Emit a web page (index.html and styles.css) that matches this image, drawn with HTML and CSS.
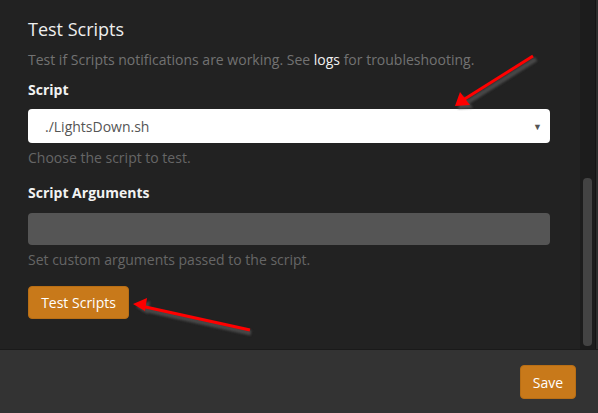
FILE: index.html
```html
<!DOCTYPE html>
<html>
<head>
<meta charset="utf-8">
<link rel="stylesheet" href="styles.css">
</head>
<body>
<div class="page">
  <div class="main">
    <div class="content">
      <h2 class="title">Test Scripts</h2>
      <p class="desc">Test if Scripts notifications are working. See <a class="link">logs</a> for troubleshooting.</p>
      <div class="label label-first">Script</div>
      <div class="select"><span>./LightsDown.sh</span><span class="caret">&#9660;</span></div>
      <div class="help">Choose the script to test.</div>
      <div class="label label-second">Script Arguments</div>
      <div class="input"></div>
      <div class="help">Set custom arguments passed to the script.</div>
      <button class="btn btn-test">Test Scripts</button>
    </div>
    <div class="track"><div class="thumb"></div></div>
    <div class="edge"></div>
  </div>
  <div class="footer">
    <button class="btn btn-save">Save</button>
  </div>
  <svg class="arrows" width="598" height="413" viewBox="0 0 598 413">
    <defs>
      <filter id="blur" x="-20%" y="-20%" width="140%" height="140%">
        <feGaussianBlur stdDeviation="1.2"/>
      </filter>
    </defs>
    <g filter="url(#blur)" opacity="0.75">
      <line x1="536" y1="59" x2="466" y2="103" stroke="#555" stroke-width="5"/>
      <polygon points="458,109 463,95 473,108" fill="#555"/>
      <line x1="251" y1="333" x2="143" y2="309" stroke="#555" stroke-width="5"/>
      <polygon points="136,307 150,301 148,314" fill="#555"/>
    </g>
    <line x1="533" y1="56" x2="463" y2="100" stroke="#f00" stroke-width="3"/>
    <polygon points="455,106 460,92 470,105" fill="#f00"/>
    <line x1="250" y1="330" x2="141" y2="306" stroke="#f00" stroke-width="3"/>
    <polygon points="133,304 147,298 145,311" fill="#f00"/>
  </svg>
</div>
</body>
</html>
```

FILE: styles.css
```css
html, body {
  margin: 0;
  padding: 0;
  background: #222222;
}

.page {
  position: relative;
  width: 598px;
  height: 413px;
  display: flex;
  flex-direction: column;
  font-family: "Open Sans", "Liberation Sans", sans-serif;
  overflow: hidden;
}

.main {
  display: flex;
  height: 349px;
  background: #222222;
}

.content {
  flex: 1;
  padding: 17px 30px 0 28px;
}

.title {
  margin: 0;
  font-size: 18px;
  line-height: 24px;
  font-weight: 400;
  color: #eeeeee;
}

.desc {
  margin: 9px 0 0 0;
  font-size: 14px;
  line-height: 20px;
  color: #727272;
}

.link {
  color: #f0f0f0;
}

.label {
  font-size: 14px;
  line-height: 20px;
  font-weight: 700;
  color: #f2f2f2;
}

.label-first {
  margin-top: 10px;
}

.label-second {
  margin-top: 15px;
}

.select {
  margin-top: 9px;
  height: 34px;
  box-sizing: border-box;
  background: #ffffff;
  border-radius: 4px;
  display: flex;
  align-items: center;
  justify-content: space-between;
  padding: 0 8px 0 17px;
  font-size: 14px;
  color: #555555;
}

.caret {
  font-size: 9px;
  color: #555555;
}

.help {
  margin-top: 5px;
  font-size: 14px;
  line-height: 20px;
  color: #666666;
}

.input {
  margin-top: 10px;
  height: 32px;
  background: #555555;
  border-radius: 4px;
}

.btn {
  font-family: "Open Sans", "Liberation Sans", sans-serif;
  font-size: 14px;
  color: #ffffff;
  background: #c8791a;
  border: 1px solid #b86e15;
  border-radius: 4px;
  box-sizing: border-box;
  padding: 0;
  display: block;
}

.btn-test {
  margin-top: 16px;
  width: 101px;
  height: 33px;
}

.track {
  width: 15px;
  background: #1c1c1c;
  display: flex;
  flex-direction: column;
}

.thumb {
  margin: 178px 0 0 3px;
  width: 9px;
  height: 168px;
  background: #434343;
  border-radius: 4px;
}

.edge {
  width: 2px;
  background: #2c2c2c;
  border-left: 1px solid #151515;
}

.footer {
  flex: 1;
  background: #333333;
  border-top: 1px solid #1a1a1a;
  display: flex;
  justify-content: flex-end;
  align-items: flex-start;
  padding: 15px 22px 0 0;
}

.btn-save {
  width: 56px;
  height: 34px;
}

.arrows {
  position: absolute;
  left: 0;
  top: 0;
  pointer-events: none;
}
```
